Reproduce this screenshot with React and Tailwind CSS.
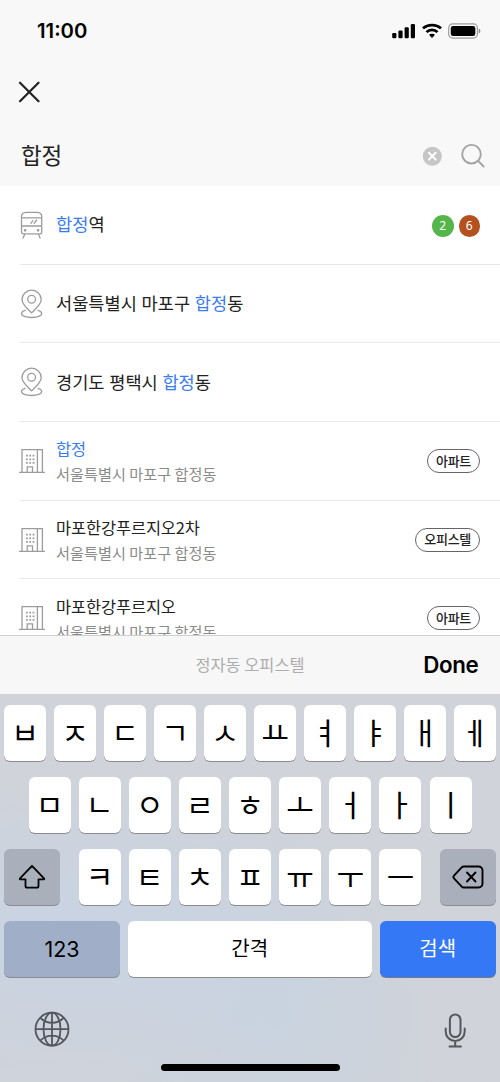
import React from 'react';

const RESULTS = [
    { id: 1, icon: 'train', parts: [['합정', true], ['역', false]], lines: ['2', '6'] },
    { id: 2, icon: 'pin', parts: [['서울특별시 마포구 ', false], ['합정', true], ['동', false]] },
    { id: 3, icon: 'pin', parts: [['경기도 평택시 ', false], ['합정', true], ['동', false]] },
    { id: 4, icon: 'building', parts: [['합정', true]], address: '서울특별시 마포구 합정동', tag: '아파트' },
    { id: 5, icon: 'building', parts: [['마포한강푸르지오2차', false]], address: '서울특별시 마포구 합정동', tag: '오피스텔' },
    { id: 6, icon: 'building', parts: [['마포한강푸르지오', false]], address: '서울특별시 마포구 합정동', tag: '아파트' }
];

const LINE_COLORS = {
    2: 'bg-[#54b54a]',
    6: 'bg-[#b5501f]'
};

const KEY_ROWS = [
    ['ㅂ', 'ㅈ', 'ㄷ', 'ㄱ', 'ㅅ', 'ㅛ', 'ㅕ', 'ㅑ', 'ㅐ', 'ㅔ'],
    ['ㅁ', 'ㄴ', 'ㅇ', 'ㄹ', 'ㅎ', 'ㅗ', 'ㅓ', 'ㅏ', 'ㅣ'],
    ['ㅋ', 'ㅌ', 'ㅊ', 'ㅍ', 'ㅠ', 'ㅜ', 'ㅡ']
];

const TrainIcon = () => (
    <svg width="24" height="30" viewBox="0 0 24 30" fill="none" stroke="#9c9c9c" strokeWidth="1.3" strokeLinecap="round">
        <path d="M1.500 21.900V6.300C1.500 3.500 3.800 2.300 6.600 2.300h10c2.800 0 5.100 1.200 5.100 4v15.600a2 2 0 0 1-2 2H3.500a2 2 0 0 1-2-2zM1.600 7.900h20M1.600 16h20" />
        <path d="M10.900 13.300l2-2.600M14.200 13.300l2.400-3.300" />
        <path d="M4.600 24.500L3.100 28M18.600 24.500l1.500 3.500" />
        <circle cx="5.100" cy="20.300" r="0.700" fill="#9c9c9c" />
        <circle cx="18.100" cy="20.300" r="0.700" fill="#9c9c9c" />
    </svg>
);

const PinIcon = () => (
    <svg width="24" height="30" viewBox="0 0 24 30" fill="none" stroke="#9c9c9c" strokeWidth="1.3" strokeLinecap="round" strokeLinejoin="round">
        <path d="M11.600 23.900C9.100 21 2 16 2 10.600a9.600 9.400 0 0 1 19.200 0C21.200 16 14.100 21 11.600 23.900z" />
        <circle cx="11.600" cy="10.300" r="3.900" />
        <path d="M5.200 21.300C2.600 22 1.500 23.300 1.500 24.600c0 2.300 4.500 3.900 10.100 3.900s10.100-1.600 10.100-3.900c0-1.300-1.100-2.600-3.700-3.300" />
    </svg>
);

const BuildingIcon = () => (
    <svg width="28" height="30" viewBox="0 0 28 30" fill="none" stroke="#9c9c9c" strokeWidth="1.300">
        <path d="M1 26.400h26M4 26.400V3.600h20.400v22.800M19.400 3.600v22.800M9.200 26.400v-5.500h5.300v5.500" />
        <path d="M8 9.700h8.600M8 13.300h8.600M8 16.900h8.600" strokeWidth="1.800" strokeDasharray="1.800 1.500" />
    </svg>
);

const ROW_ICONS = {
    train: TrainIcon,
    pin: PinIcon,
    building: BuildingIcon
};

const StatusBar = () => (
    <div className="flex h-[60px] items-center justify-between pr-[18px] pl-[37px]">
        <span className="pt-[2px] font-['Inter'] text-[20.300px] font-semibold text-black">11:00</span>
        <div className="flex items-center gap-[6px] pt-[1px]">
            <svg width="24" height="16" viewBox="0 0 24 16" fill="#000" className="-ml-px mr-px">
                <rect x="0.200" y="10" width="4.200" height="5.300" rx="1.200" />
                <rect x="6.400" y="7.500" width="4.200" height="7.800" rx="1.200" />
                <rect x="12.600" y="4.300" width="4.200" height="11" rx="1.200" />
                <rect x="18.800" y="1" width="4.200" height="14.300" rx="1.200" />
            </svg>
            <svg width="20" height="16" viewBox="0 0 20 16" fill="none" stroke="#000" strokeWidth="2.700" className="-ml-px mr-px">
                <path d="M1 5.400C5.600 0.900 14.400 0.900 19 5.400" />
                <path d="M4.500 9.100c2.800-2.900 8.200-2.900 11 0" />
                <path d="M10 14.900l-3-3.100c1.500-1.500 4.500-1.500 6 0z" fill="#000" stroke="none" />
            </svg>
            <svg width="33" height="16" viewBox="0 0 33 16" className="-ml-px mr-px">
                <rect x="0.700" y="0.900" width="28.700" height="14.200" rx="4" fill="none" stroke="#9c9c9c" strokeWidth="1.200" />
                <rect x="2.800" y="3" width="24.500" height="10" rx="2.300" fill="#000" />
                <path d="M30.700 5.500c2.200 0.900 2.200 4.100 0 5z" fill="#8c8c8c" />
            </svg>
        </div>
    </div>
);

const SearchHeader = () => (
    <header className="h-[186px] shrink-0 bg-[#f8f8f8]">
        <StatusBar />
        <div className="flex h-[64px] items-center pl-[18px]">
            <svg width="22" height="22" viewBox="0 0 22 22" stroke="#222" strokeWidth="2.200" strokeLinecap="round">
                <path d="M2 1.700l18.500 18.500M20.500 1.700L2 20.200" />
            </svg>
        </div>
        <div className="flex h-[62px] items-center pr-[15px] pl-[21px]">
            <span className="flex-1 pb-[1px] text-[22.5px] leading-none tracking-[-0.2px] text-[#222]">합정</span>
            <svg className="mr-[18px]" width="20" height="22" viewBox="0 0 20 22">
                <circle cx="10.300" cy="12.200" r="9.500" fill="#c6c6c6" />
                <path d="M6.900 8.800l6.800 6.800M13.700 8.800l-6.800 6.800" stroke="#fff" strokeWidth="2" strokeLinecap="round" />
            </svg>
            <svg width="25" height="25" viewBox="0 0 25 25" fill="none" stroke="#a3a3a3" strokeWidth="1.900" strokeLinecap="round">
                <circle cx="11.500" cy="11.200" r="9.300" />
                <path d="M18.200 17.900l5.400 5.600" />
            </svg>
        </div>
    </header>
);

const ResultRow = ({ item }) => {
    const Icon = ROW_ICONS[item.icon];
    return (
        <li className="ml-[20px] flex h-[78.7px] shrink-0 items-center border-b border-[#e8e8e8] pr-[20px]">
            <div className="-ml-[2px] flex w-[28px] shrink-0 justify-center">
                <Icon />
            </div>
            <div className="ml-[10px] flex-1 whitespace-nowrap">
                <p className={item.address ? 'text-[16.4px] leading-[26px] tracking-[-0.1px] text-[#222]' : 'pb-[1px] text-[17.600px] leading-[26px] text-[#222] [word-spacing:0.7px]'}>
                    {item.parts.map(([text, hit]) => (
                        <span key={text} className={hit ? 'text-[#3a7df0]' : ''}>{text}</span>
                    ))}
                </p>
                {item.address && <p className="pb-[1px] text-[15.200px] leading-[24px] text-[#8b8b8b]">{item.address}</p>}
            </div>
            {item.lines && (
                <div className="flex gap-[5px] pt-[2px]">
                    {item.lines.map((line) => (
                        <span key={line} className={`flex h-[21.5px] w-[21.5px] items-center justify-center rounded-full font-['Noto_Sans'] text-[12px] text-white ${LINE_COLORS[line]}`}>
                            {line}
                        </span>
                    ))}
                </div>
            )}
            {item.tag && (
                <span className="flex h-[24px] items-center rounded-full border border-[#666] px-[8px] pb-[1px] text-[13px] font-medium tracking-[-0.300px] text-[#222]">{item.tag}</span>
            )}
        </li>
    );
};

const Key = ({ children }) => (
    <div className="flex h-[56px] w-[42px] items-center justify-center rounded-[6px] bg-white pb-[4px] text-[30px] text-black shadow-[0_1px_0_#898b8f]">
        {children}
    </div>
);

const Keyboard = () => (
    <section className="flex flex-1 flex-col bg-[#d0d3d9] bg-[radial-gradient(ellipse_at_15%_62%,#c8d3e3_0%,transparent_50%),radial-gradient(ellipse_at_55%_82%,#c9d3df_0%,transparent_45%)] px-[4px] pt-[11px]">
        <div className="flex justify-between">
            {KEY_ROWS[0].map((char) => <Key key={char}>{char}</Key>)}
        </div>
        <div className="mt-[16px] flex justify-between px-[24.500px]">
            {KEY_ROWS[1].map((char) => <Key key={char}>{char}</Key>)}
        </div>
        <div className="mt-[16px] flex justify-between">
            <div className="flex h-[56px] w-[56px] items-center justify-center rounded-[6px] bg-[#a9b0bc] shadow-[0_1px_0_#898b8f]">
                <svg width="28" height="26" viewBox="0 0 28 26" fill="none" stroke="#000" strokeWidth="1.800" strokeLinejoin="round">
                    <path d="M14 1.800L26 14.300c.5.500.3 1-.3 1h-5.200v6.700a1.700 1.700 0 0 1-1.700 1.700H9.200A1.700 1.700 0 0 1 7.500 22v-6.700H2.300c-.6 0-.8-.5-.3-1z" />
                </svg>
            </div>
            <div className="flex w-[343px] justify-between">
                {KEY_ROWS[2].map((char) => <Key key={char}>{char}</Key>)}
            </div>
            <div className="flex h-[56px] w-[56px] items-center justify-center rounded-[6px] bg-[#a9b0bc] shadow-[0_1px_0_#898b8f]">
                <svg width="32" height="24" viewBox="0 0 32 24" fill="none" stroke="#000" strokeWidth="1.900" strokeLinecap="round" strokeLinejoin="round">
                    <path d="M11.800 1.500H26.500a4 4 0 0 1 4 4v13a4 4 0 0 1-4 4H11.800c-.9 0-1.500-.3-2.100-.9L2 13.300c-.8-.9-.8-1.700 0-2.600l7.700-8.300c.6-.6 1.200-.9 2.100-.9z" />
                    <path d="M15 7.500l8.500 9M23.500 7.500l-8.500 9" />
                </svg>
            </div>
        </div>
        <div className="mt-[16px] flex h-[56px] gap-[8px]">
            <div className="flex w-[116px] items-center justify-center rounded-[6px] bg-[#a0afc7] font-['Inter'] text-[21.500px] text-black shadow-[0_1px_0_#898b8f]">123</div>
            <div className="flex flex-1 items-center justify-center rounded-[6px] bg-white pb-[2px] text-[20px] text-black shadow-[0_1px_0_#898b8f]">간격</div>
            <div className="flex w-[116.500px] items-center justify-center rounded-[6px] bg-[#3478f6] pb-[2px] text-[20px] text-white shadow-[0_1px_0_#77797f]">검색</div>
        </div>
        <div className="mt-[34px] flex justify-between pr-[29px] pl-[30px]">
            <svg width="36" height="36" viewBox="0 0 36 36" fill="none" stroke="#54575c" strokeWidth="1.800">
                <circle cx="18" cy="18.200" r="16.500" />
                <ellipse cx="18" cy="18.200" rx="8.500" ry="16.500" />
                <path d="M18 1.700v33M1.500 18.200h33M6.500 7c6.500 6.500 16.500 6.500 23 0M6.500 29.400c6.500-6.500 16.500-6.500 23 0" />
            </svg>
            <svg width="24" height="37" viewBox="0 0 24 37" fill="none" stroke="#54575c" strokeWidth="2" strokeLinecap="round">
                <rect x="6.900" y="3.500" width="10.600" height="22.500" rx="5.300" />
                <path d="M2.700 17.600v3a9.500 9.500 0 0 0 19 0v-3M12.200 30.100v5M6.500 35.500h11.400" />
            </svg>
        </div>
        <div className="mx-auto mt-[16px] h-[7px] w-[179px] rounded-full bg-black" />
    </section>
);

const App = () => {
    return (
        <div className="flex h-[1082px] w-[500px] flex-col overflow-hidden bg-white font-['Noto_Sans_CJK_KR',sans-serif]">
            <SearchHeader />
            <ul className="flex h-[449px] shrink-0 flex-col overflow-hidden">
                {RESULTS.map((item) => <ResultRow key={item.id} item={item} />)}
            </ul>
            {/* Keyboard accessory bar */}
            <div className="grid h-[59px] shrink-0 grid-cols-[1fr_auto_1fr] items-center border-t border-[#cfcfcf] bg-[#f7f7f7]">
                <span />
                <span className="pb-[2px] text-[16.400px] text-[#adadad]">정자동 오피스텔</span>
                <span className="pr-[21.500px] text-right font-['Inter'] text-[22.300px] font-semibold tracking-[-0.300px] text-black">Done</span>
            </div>
            <Keyboard />
        </div>
    );
};

export default App;
